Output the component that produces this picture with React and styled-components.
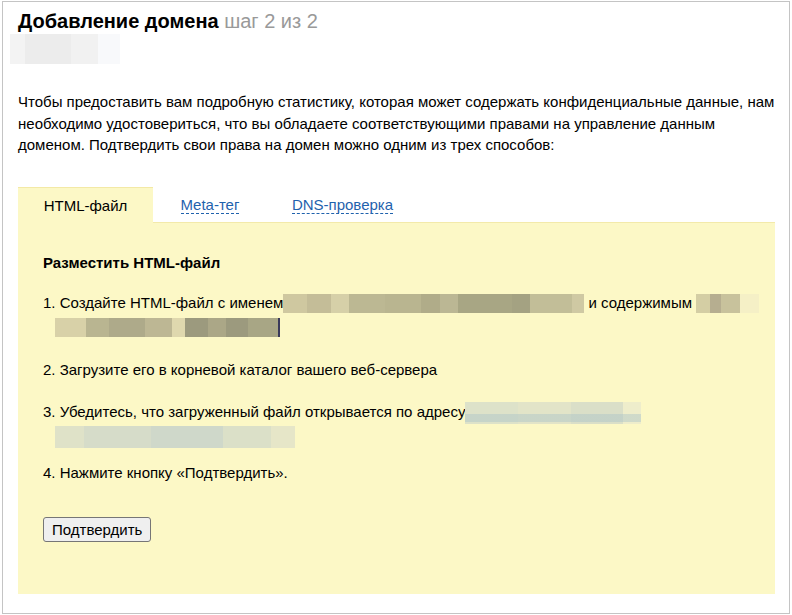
import React from "react";
import styled, { createGlobalStyle } from "styled-components";

const Global = createGlobalStyle`
  html, body { margin: 0; padding: 0; background: #fff; }
  body { font-family: "Liberation Sans", Arial, sans-serif; color: #000; }
`;

const Frame = styled.div`
  box-sizing: border-box;
  width: 788px;
  height: 613px;
  margin: 1px 0 0 2px;
  border: 1px solid #c4c4c4;
  padding: 7px 14px 0 15px;
`;

const Title = styled.h1`
  margin: 0;
  font-size: 20px;
  font-weight: bold;
  line-height: 24px;
`;

const Step = styled.span`
  font-weight: normal;
  color: #999;
`;

const Blur = styled.span`
  display: inline-block;
  vertical-align: middle;
  width: ${(p) => p.$w}px;
  height: ${(p) => p.$h || 19}px;
  background: ${(p) => p.$bg};
`;

const DomainBlur = styled(Blur)`
  display: block;
  margin: 1px 0 0 -8px;
`;

const Intro = styled.p`
  margin: 27px 0 0;
  font-size: 15px;
  line-height: 21.5px;
`;

const Tabs = styled.div`
  display: flex;
  margin-top: 31px;
  height: 36px;
`;

const Tab = styled.div`
  box-sizing: border-box;
  width: ${(p) => p.$w}px;
  display: flex;
  align-items: center;
  justify-content: center;
  font-size: 15px;
  background: ${(p) => (p.$active ? "#fcf8c6" : "transparent")};
  border-top: 1px solid ${(p) => (p.$active ? "#f3e9a6" : "transparent")};
`;

const TabLink = styled.span`
  color: #1f62ad;
  border-bottom: 1px dashed #1f62ad;
  line-height: 17px;
`;

const Panel = styled.div`
  box-sizing: border-box;
  width: 757px;
  height: 372px;
  background: #fcf8c6;
  padding: 30px 10px 0 25px;
  border-top: 1px solid #f3eaaa;
  margin-top: -1px;
`;

const Heading = styled.h2`
  margin: 0;
  font-size: 15px;
  font-weight: bold;
  line-height: 20px;
`;

const Item = styled.p`
  margin: ${(p) => p.$mt}px 0 0;
  font-size: 15px;
  line-height: 24px;
  padding-left: 12px;
  text-indent: -12px;
`;

const Button = styled.button`
  margin-top: 32px;
  height: 25px;
  padding: 0 8px;
  font-family: "Liberation Sans", Arial, sans-serif;
  font-size: 15px;
  color: #000;
  background: #efefef;
  border: 1px solid #767676;
  border-radius: 3px;
`;

const olive =
  "linear-gradient(90deg, #cfc8a0 0 8%, #c4bd98 8% 16%, #d6d0a8 16% 22%, #bcb893 22% 34%, #b9b590 34% 46%, #b0ac89 46% 52%, #bbb794 52% 58%, #a8a684 58% 76%, #a4a282 76% 82%, #c2be98 82% 96%, #cfc9a3 96% 100%)";
const olive2 =
  "linear-gradient(90deg, #d4cea4 0 22%, #b6ae90 22% 40%, #c8c29c 40% 70%, #f5f0c6 70% 100%)";
const olive3 =
  "linear-gradient(90deg, #d8d1a8 0 14%, #b9b591 14% 24%, #aeaa8a 24% 40%, #bdb794 40% 52%, #dfd8ae 52% 58%, #9c9a7e 58% 68%, #aba787 68% 76%, #9c9a7e 76% 86%, #a8a685 86% 99%, #3a3a5a 99% 100%)";
const pale =
  "linear-gradient(180deg, transparent 0 55%, rgba(170,195,200,0.45) 55% 92%, transparent 92%), linear-gradient(90deg, #dde2c9 0 30%, #e2e4c8 30% 60%, #dadfc8 60% 90%, #eeedcb 90% 100%)";
const pale2 =
  "linear-gradient(90deg, #dfe2c8 0 12%, #d6dcc9 12% 40%, #cfd8ca 40% 70%, #dbe0c8 70% 90%, #e6e6c8 90% 100%)";
const grey =
  "linear-gradient(90deg, #f3f3f3 0 14%, #ececec 14% 55%, #f1f1f1 55% 80%, #f8f9fb 80% 100%)";

export default function App() {
  return (
    <>
      <Global />
      <Frame>
        <Title>
          Добавление домена <Step>шаг 2 из 2</Step>
        </Title>
        <DomainBlur $w={110} $h={30} $bg={grey} />
        <Intro>
          Чтобы предоставить вам подробную статистику, которая может содержать
          конфиденциальные данные, нам необходимо удостовериться, что вы
          обладаете соответствующими правами на управление данным доменом.
          Подтвердить свои права на домен можно одним из трех способов:
        </Intro>
        <Tabs>
          <Tab $w={135} $active>
            HTML-файл
          </Tab>
          <Tab $w={114}>
            <TabLink>Meta-тег</TabLink>
          </Tab>
          <Tab $w={151}>
            <TabLink>DNS-проверка</TabLink>
          </Tab>
        </Tabs>
        <Panel>
          <Heading>Разместить HTML-файл</Heading>
          <Item $mt={18}>
            1. Создайте HTML-файл с именем<Blur $w={301} $bg={olive} /> и
            содержимым <Blur $w={63} $bg={olive2} /> <Blur $w={225} $bg={olive3} />
          </Item>
          <Item $mt={19}>2. Загрузите его в корневой каталог вашего веб-сервера</Item>
          <Item $mt={18}>
            3. Убедитесь, что загруженный файл открывается по адресу
            <Blur $w={176} $h={22} $bg={pale} /> <Blur $w={240} $h={22} $bg={pale2} />
          </Item>
          <Item $mt={13}>4. Нажмите кнопку «Подтвердить».</Item>
          <Button>Подтвердить</Button>
        </Panel>
      </Frame>
    </>
  );
}
